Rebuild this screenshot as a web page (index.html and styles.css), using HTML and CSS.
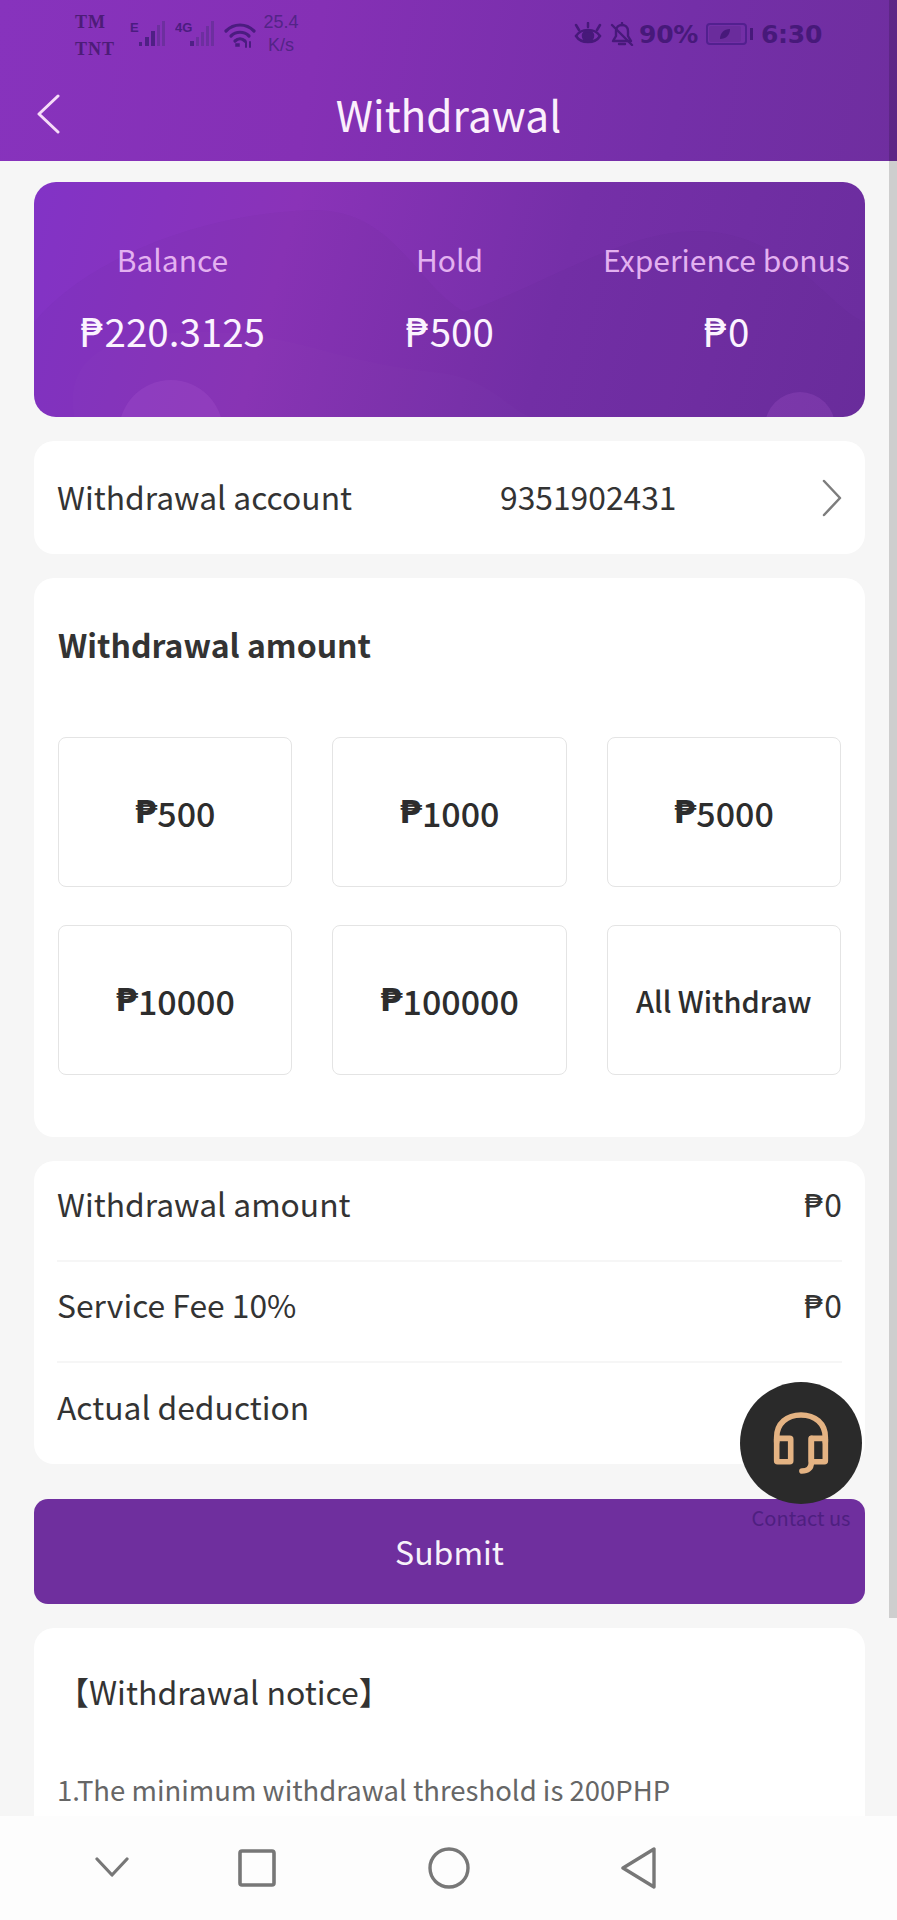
FILE: index.html
```html
<!DOCTYPE html>
<html lang="en">
<head>
<meta charset="utf-8">
<title>Withdrawal</title>
<link rel="stylesheet" href="styles.css">
</head>
<body>
<div class="app">
  <header class="top">
    <div class="status">
      <div class="carriers"><span>TM</span><span>TNT</span></div>
      <svg class="sig" width="38" height="30" viewBox="0 0 38 30"><text x="0" y="13" class="sig-t">E</text><g fill="#4f2085"><rect x="9" y="23" width="3" height="4"/><rect x="15" y="18" width="4" height="9"/><rect x="21" y="12" width="4" height="15"/></g><g fill="#6d2f9f"><rect x="27" y="6" width="3" height="21"/><rect x="32" y="2" width="3" height="25"/></g></svg>
      <svg class="sig sig2" width="42" height="30" viewBox="0 0 42 30"><text x="0" y="13" class="sig-t">4G</text><g fill="#4f2085"><rect x="15" y="22" width="4" height="5"/></g><g fill="#6d2f9f"><rect x="21" y="18" width="3" height="9"/><rect x="26" y="13" width="3" height="14"/><rect x="31" y="7" width="3" height="20"/><rect x="36" y="2" width="3" height="25"/></g></svg>
      <svg class="wifi" width="32" height="28" viewBox="0 0 32 28" fill="none" stroke="#4b1c80" stroke-width="3.2" stroke-linecap="round"><path d="M2 10C10 2 22 2 30 10"/><path d="M7 15C12 10 20 10 25 15"/><path d="M11 20C14 17 18 17 21 20"/><rect x="12" y="23" width="3" height="2" fill="#4b1c80" stroke-width="1.5"/><path d="M22 21v5M26 21v5" stroke-width="2"/></svg>
      <div class="speed"><span>25.4</span><span>K/s</span></div>
      <div class="status-right">
        <svg width="28" height="24" viewBox="0 0 28 24" fill="none" stroke="#47197a" stroke-width="2.5"><path d="M2 14C7 6 21 6 26 14C21 22 7 22 2 14Z"/><circle cx="14" cy="14" r="5" fill="#47197a"/><path d="M5 8L2 3M14 5V1M23 8L26 3" stroke-linecap="round"/></svg>
        <svg width="24" height="24" viewBox="0 0 24 24" fill="none" stroke="#47197a" stroke-width="2.4" stroke-linecap="round" stroke-linejoin="round"><path d="M3 19H21L18 14V9C18 5 15 3 12 3C9 3 6 5 6 9V14Z"/><path d="M9 22H15M12 1V3M2 3L22 23"/></svg>
        <span class="pct">90%</span>
        <div class="battery"><div class="battery-fill"><svg width="12" height="12" viewBox="0 0 12 12"><path d="M1 11C1 5 5 1 11 1C11 7 7 11 1 11Z" fill="#47197a"/></svg></div></div>
        <span class="nub"></span>
        <span class="clock">6:30</span>
      </div>
    </div>
    <div class="titlebar">
      <svg class="back" width="24" height="40" viewBox="0 0 24 40" fill="none" stroke="#f6dcf8" stroke-width="3" stroke-linecap="round" stroke-linejoin="round"><path d="M21 2L2 20L21 38"/></svg>
      <h1>Withdrawal</h1>
    </div>
  </header>

  <main class="content">
    <section class="balance">
      <svg class="blobs" viewBox="0 0 831 235" preserveAspectRatio="none"><path d="M0 140C60 70 180 30 280 28C360 28 380 100 430 130C520 100 600 40 680 50C760 60 800 130 831 140V235H0Z" fill="#3a1060" fill-opacity=".035"/><path d="M40 235C30 170 80 150 170 150C260 150 300 180 400 190C460 195 480 235 500 235Z" fill="#ffffff" fill-opacity=".012"/><circle cx="137" cy="250" r="52" fill="#b05fd8" fill-opacity=".22"/><circle cx="766" cy="245" r="35" fill="#b05fd8" fill-opacity=".22"/></svg>
      <div class="stat"><span class="stat-label">Balance</span><span class="stat-value"><span class="cur">₱</span>220.3125</span></div>
      <div class="stat"><span class="stat-label">Hold</span><span class="stat-value"><span class="cur">₱</span>500</span></div>
      <div class="stat"><span class="stat-label">Experience bonus</span><span class="stat-value"><span class="cur">₱</span>0</span></div>
    </section>

    <section class="card account">
      <span class="account-label">Withdrawal account</span>
      <span class="account-num">9351902431</span>
      <svg class="chev" width="20" height="40" viewBox="0 0 20 40" fill="none" stroke="#7d7d7d" stroke-width="2.5" stroke-linecap="round" stroke-linejoin="round"><path d="M2 3L18 20L2 37"/></svg>
    </section>

    <section class="card amounts">
      <h2>Withdrawal amount</h2>
      <div class="grid">
        <div class="amt"><span class="cur cur-bold">₱</span>500</div>
        <div class="amt"><span class="cur cur-bold">₱</span>1000</div>
        <div class="amt"><span class="cur cur-bold">₱</span>5000</div>
        <div class="amt"><span class="cur cur-bold">₱</span>10000</div>
        <div class="amt"><span class="cur cur-bold">₱</span>100000</div>
        <div class="amt amt-all">All Withdraw</div>
      </div>
    </section>

    <section class="card rows">
      <div class="row"><span>Withdrawal amount</span><span><span class="cur">₱</span>0</span></div>
      <div class="row"><span>Service Fee 10%</span><span><span class="cur">₱</span>0</span></div>
      <div class="row"><span>Actual deduction</span></div>
    </section>

    <div class="submit">Submit</div>

    <section class="card notice">
      <h3>【Withdrawal notice】</h3>
      <p>1.The minimum withdrawal threshold is 200PHP</p>
    </section>
  </main>

  <nav class="sysnav">
    <svg class="nav-ic n1" width="34" height="22" viewBox="0 0 34 22" fill="none" stroke="#777" stroke-width="3.2" stroke-linecap="round" stroke-linejoin="round"><path d="M2 3L17 19L32 3"/></svg>
    <svg class="nav-ic n2" width="38" height="38" viewBox="0 0 38 38" fill="none" stroke="#777" stroke-width="3.6" stroke-linejoin="round"><rect x="2" y="2" width="34" height="34" rx="2"/></svg>
    <svg class="nav-ic n3" width="42" height="42" viewBox="0 0 42 42" fill="none" stroke="#777" stroke-width="3.4"><circle cx="21" cy="21" r="19"/></svg>
    <svg class="nav-ic n4" width="36" height="42" viewBox="0 0 36 42" fill="none" stroke="#777" stroke-width="3.4" stroke-linejoin="round"><path d="M33 2V40L2 21Z"/></svg>
  </nav>

  <div class="contact">
    <div class="contact-btn">
      <svg width="58" height="62" viewBox="0 0 62 66" fill="none" stroke="#e4b383" stroke-width="6" stroke-linecap="round" stroke-linejoin="round"><path d="M5 32V27C5 12 16 3 31 3C46 3 57 12 57 27V32"/><rect x="5" y="28" width="15" height="25" rx="1"/><rect x="42" y="28" width="15" height="25" rx="1"/><path d="M42 28V54C42 60 38 63 32 63"/></svg>
    </div>
    <span class="contact-label">Contact us</span>
  </div>
  <div class="scrollbar"></div>
</div>
</body>
</html>
```
FILE: styles.css
```css
* { box-sizing: border-box; }
html, body { margin: 0; padding: 0; }
body { font-family: "Noto Sans CJK SC", "Noto Sans", sans-serif; color: #333; background: #f6f6f6; }
.app { position: relative; width: 897px; height: 1920px; overflow: hidden; display: flex; flex-direction: column; background: #f6f6f6; }

.top { height: 161px; flex: none; background: linear-gradient(100deg, #8733bd 0%, #8530b5 35%, #742fa8 75%, #6f2e9f 100%); display: flex; flex-direction: column; }
.status { height: 69px; padding: 11px 0 0 75px; display: flex; align-items: flex-start; color: #4b1c80; }
.carriers { width: 54px; display: flex; flex-direction: column; gap: 5px; font: bold 18px/22px "Liberation Serif", serif; color: #4d1c78; letter-spacing: 1px; }
.sig { margin: 8px 0 0 1px; flex: none; }
.sig2 { margin-left: 7px; }
.sig-t { font: bold 13px "Liberation Sans", sans-serif; fill: #4b1c80; }
.wifi { margin: 10px 0 0 7px; flex: none; }
.speed { width: 42px; margin-left: 4px; display: flex; flex-direction: column; align-items: center; font: 18px/23px "Liberation Sans", sans-serif; color: #532487; }
.status-right { margin-left: auto; margin-right: 75px; height: 46px; display: flex; align-items: center; gap: 8px; color: #47197a; }
.pct, .clock { font: bold 25px/1 "DejaVu Sans", sans-serif; letter-spacing: -.3px; }
.pct { margin-left: -3px; }
.battery { width: 41px; height: 22px; border: 2px solid #52208f; border-radius: 4px; padding: 1px; }
.battery-fill { width: 32px; height: 100%; background: #6a2c9c; border-radius: 2px; display: flex; align-items: center; justify-content: center; }
.nub { width: 3px; height: 12px; background: #47197a; margin-left: -5px; }
.titlebar { position: relative; flex: 1; display: flex; align-items: center; justify-content: center; padding-bottom: 3px; }
.back { position: absolute; left: 37px; top: 25px; }
.titlebar h1 { margin: 0; font-size: 42.4px; font-weight: 400; line-height: 60px; color: #fbeffc; }

.content { flex: 1; min-height: 0; overflow: hidden; padding: 21px 32px 0 34px; display: flex; flex-direction: column; gap: 24px; }
.card { background: #fff; border-radius: 20px; flex: none; }
.cur { font-family: "DejaVu Sans", sans-serif; line-height: 1; }
.cur-bold { font-weight: 700; font-size: .95em; }

.balance { position: relative; overflow: hidden; flex: none; height: 235px; border-radius: 22px; background: linear-gradient(105deg, #8233c6 0%, #8a33b8 30%, #752fa8 62%, #6b2d9e 100%); display: grid; grid-template-columns: repeat(3, 1fr); align-items: start; }
.blobs { position: absolute; inset: 0; width: 100%; height: 100%; }
.stat { position: relative; display: flex; flex-direction: column; align-items: center; white-space: nowrap; padding-top: 54px; }
.stat-label { font-size: 30px; line-height: 46px; color: #e3b1f0; }
.stat-value { font-size: 38.5px; line-height: 54px; margin-top: 21px; color: #fbf3ff; }

.account { height: 113px; padding: 0 23px 4px; display: flex; align-items: center; font-size: 31.8px; }
.account-label { width: 443px; }
.account-num { flex: 1; }
.chev { margin-top: 4px; }
.amounts { height: 559px; padding: 38px 24px 0; }
.amounts h2 { margin: 0; font-size: 32px; line-height: 56px; font-weight: 700; color: #333; }
.grid { margin-top: 65px; display: grid; grid-template-columns: repeat(3, 1fr); grid-auto-rows: 150px; gap: 38px 40px; }
.amt { border: 1.5px solid #e4e4e4; border-radius: 8px; display: flex; align-items: center; justify-content: center; font-size: 34px; font-weight: 500; color: #2d2d2d; }
.amt-all { font-size: 29px; }

.rows { padding: 0 23px; }
.row { height: 101px; display: flex; align-items: center; justify-content: space-between; font-size: 31.8px; border-bottom: 2px solid #f6f6f6; padding-bottom: 16px; }
.row:last-child { border-bottom: 0; }

.submit { flex: none; height: 105px; margin-top: 11px; padding-bottom: 2px; background: #6f2f9e; border-radius: 14px; color: #f7f2fa; font-size: 32px; display: flex; align-items: center; justify-content: center; }

.notice { height: 400px; padding: 36px 23px 0; }
.notice h3 { margin: 0; font-size: 32px; font-weight: 400; line-height: 54px; color: #333; }
.notice p { margin: 46px 0 0; font-size: 27.5px; line-height: 50px; color: #666; }

.sysnav { position: absolute; left: 0; right: 0; bottom: 0; height: 104px; background: #fdfdfd; }
.nav-ic { position: absolute; }
.n1 { left: 95px; top: 40px; }
.n2 { left: 238px; top: 33px; }
.n3 { left: 428px; top: 31px; }
.n4 { left: 621px; top: 31px; }

.contact { position: absolute; left: 740px; top: 1382px; width: 122px; display: flex; flex-direction: column; align-items: center; }
.contact-btn { width: 122px; height: 122px; border-radius: 50%; background: #2a2a2a; display: flex; align-items: center; justify-content: center; }
.contact-label { font-size: 20px; line-height: 26px; margin-top: 1px; color: #4e1f80; white-space: nowrap; }
.scrollbar { position: absolute; right: 0; top: 0; width: 8px; height: 1618px; background: rgba(0, 0, 0, .16); }
```
